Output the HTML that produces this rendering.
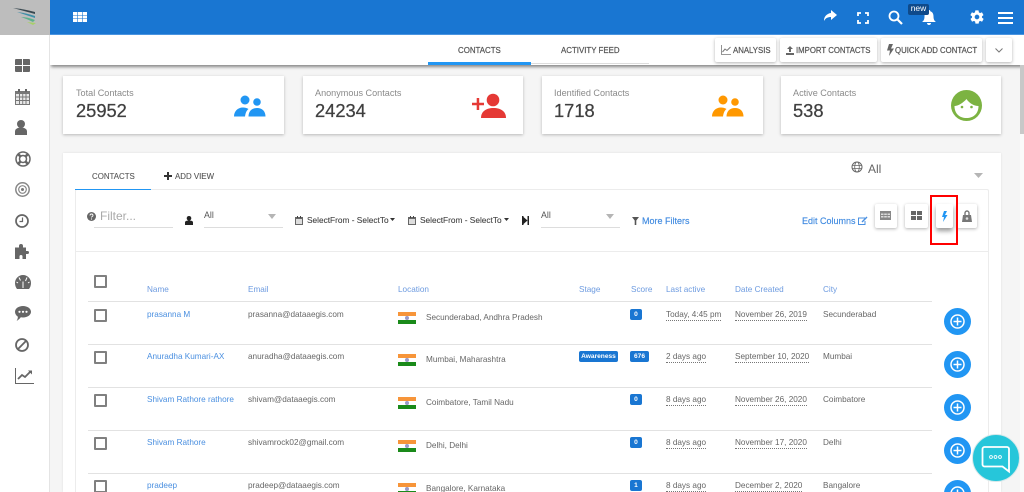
<!DOCTYPE html>
<html><head><meta charset="utf-8"><title>Contacts</title>
<style>
html,body{margin:0;padding:0;width:1024px;height:492px;overflow:hidden;background:#f5f5f5}
#w{position:relative;width:1024px;height:492px;overflow:hidden;background:#f5f5f5;font-family:"Liberation Sans",sans-serif;filter:blur(.35px)}
.a{position:absolute}
.t{position:absolute;white-space:nowrap;line-height:12px;font-size:8.2px;color:#666}
.b{color:#4a8fe0}
.h{color:#6d9be0}
.u{border-bottom:1px dotted #777;line-height:10px}
.card{position:absolute;background:#fff;top:76px;height:58px;box-shadow:0 1px 3px rgba(0,0,0,.25)}
.lab{position:absolute;left:12px;top:11px;font-size:9.1px;color:#8a8a8a;white-space:nowrap;line-height:12px}
.num{position:absolute;left:12px;top:24px;font-size:18.3px;color:#3f3f3f;line-height:22px;-webkit-text-stroke:.25px #3f3f3f}
.btn{position:absolute;top:38px;height:24px;background:#fff;border-radius:2px;box-shadow:0 1px 3px rgba(0,0,0,.3);font-size:7.8px;color:#555;line-height:25px;white-space:nowrap;-webkit-text-stroke:.2px #555}
.sb{position:absolute;top:204px;height:24px;background:#fff;border-radius:2px;box-shadow:0 1px 3px rgba(0,0,0,.3)}
.line{position:absolute;left:88px;width:844px;height:1px;background:#e2e2e2}
.cb{position:absolute;left:94px;width:9px;height:9px;border:2px solid #808080;border-radius:1px;background:#fff}
.fl{position:absolute;left:398px;width:18px;height:12px;background:linear-gradient(#f7953a 0 4px,#fff 4px 8px,#1a8a1a 8px 12px)}
.fl:after{content:"";position:absolute;left:7px;top:4px;width:4px;height:4px;border-radius:50%;background:#9a9ac8}
.bd{position:absolute;background:#1976d2;color:#fff;font-size:6.6px;font-weight:bold;text-align:center;height:11px;line-height:11px;border-radius:2px}
.plus{position:absolute;left:944px;width:27px;height:27px}
svg{position:absolute;overflow:visible}
</style></head><body><div id="w">

<!-- topbar -->
<div class="a" style="left:50px;top:0;width:974px;height:34px;background:#1976d2"></div>
<div class="a" style="left:50px;top:34px;width:974px;height:1px;background:#4a94e0"></div>
<svg style="left:73px;top:12px" width="14" height="10" viewBox="0 0 14 10"><path fill="#fff" d="M0 0h4.300v3H0zM4.900 0h4.200v3H4.900zM9.700 0H14v3H9.700zM0 3.500h4.300v3H0zM4.900 3.500h4.200v3H4.900zM9.700 3.500H14v3H9.700zM0 7h4.300v3H0zM4.900 7h4.200v3H4.900zM9.700 7H14v3H9.700z"/></svg>
<svg style="left:823px;top:10px" width="14" height="12" viewBox="0 0 14 12"><path fill="#fff" d="M8 0l6 5-6 5V7C5 7 2.500 8 1 11 .8 6.500 4 3.500 8 3z"/></svg>
<svg style="left:857px;top:12px" width="12" height="12" viewBox="0 0 12 12"><path fill="none" stroke="#fff" stroke-width="1.800" d="M1 4V1h3M8 1h3v3M11 8v3H8M4 11H1V8"/></svg>
<svg style="left:888px;top:10px" width="15" height="15" viewBox="0 0 15 15"><circle cx="6" cy="6" r="4.500" fill="none" stroke="#fff" stroke-width="1.800"/><path d="M9.500 9.500L14 14" stroke="#fff" stroke-width="2.200"/></svg>
<svg style="left:922px;top:10px" width="14" height="15" viewBox="0 0 14 15"><path fill="#fff" d="M7 0c1 0 1.300.7 1.300 1.300C10.500 2 11.500 4 11.500 6.500c0 3 1 4.500 2.500 5.500H0c1.500-1 2.500-2.500 2.500-5.500C2.500 4 3.500 2 5.700 1.300 5.700.7 6 0 7 0zM5 13h4c0 1.200-1 2-2 2s-2-.8-2-2z"/></svg>
<div class="a" style="left:908px;top:4px;width:21px;height:11px;background:#0f4a8a;border-radius:2px;color:#fff;font-size:8.5px;line-height:9px;text-align:center">new</div>
<svg style="left:969px;top:9px" width="16" height="16" viewBox="0 0 24 24"><path fill="#fff" d="M19.400 13c.1-.3.100-.7.100-1s0-.7-.1-1l2.100-1.600c.2-.2.200-.4.100-.6l-2-3.500c-.1-.2-.4-.3-.6-.2l-2.500 1c-.5-.4-1.100-.7-1.700-1l-.4-2.600c0-.3-.2-.5-.5-.5h-4c-.2 0-.5.200-.5.400l-.4 2.700c-.6.200-1.100.6-1.700 1l-2.500-1c-.2-.1-.5 0-.6.200l-2 3.500c-.1.200-.1.400.1.600L4.600 11c0 .3-.1.700-.1 1s0 .7.100 1l-2.100 1.600c-.2.200-.2.400-.1.600l2 3.500c.1.200.4.300.6.200l2.500-1c.5.400 1.100.7 1.700 1l.4 2.600c0 .3.200.5.500.5h4c.2 0 .5-.2.500-.4l.4-2.700c.6-.2 1.200-.6 1.700-1l2.500 1c.2.100.5 0 .6-.2l2-3.500c.1-.2.100-.4-.1-.6zM12 15.500a3.500 3.500 0 1 1 0-7 3.500 3.500 0 0 1 0 7z"/></svg>
<div class="a" style="left:998px;top:12px;width:15px;height:2px;background:#fff;box-shadow:0 5px 0 #fff,0 10px 0 #fff"></div>

<!-- subheader -->
<div class="a" style="left:50px;top:35px;width:974px;height:30px;background:#fff;box-shadow:0 3px 3px -1px rgba(0,0,0,.45)"></div>
<div class="t" style="left:458px;top:45px;font-size:7.9px;color:#555;-webkit-text-stroke:.2px #555">CONTACTS</div>
<div class="t" style="left:561px;top:45px;font-size:7.9px;color:#555;-webkit-text-stroke:.2px #555">ACTIVITY FEED</div>
<div class="a" style="left:531px;top:63px;width:118px;height:1px;background:#ddd"></div>
<div class="a" style="left:428px;top:62px;width:103px;height:3px;background:#2196f3"></div>

<div class="btn" style="left:715px;width:61px"><span style="position:absolute;left:18px">ANALYSIS</span></div>
<svg style="left:721px;top:45px" width="10" height="10" viewBox="0 0 10 10"><path d="M.5 0v9.500H10" fill="none" stroke="#777" stroke-width=".8"/><path d="M1.500 7L4 4l2 1.500L9.500 2" fill="none" stroke="#777" stroke-width="1"/></svg>
<div class="btn" style="left:780px;width:97px"><span style="position:absolute;left:16px">IMPORT CONTACTS</span></div>
<svg style="left:786px;top:46px" width="8" height="9" viewBox="0 0 8 9"><path d="M4 0l3 3H5v3H3V3H1zM0 7h8v2H0z" fill="#666"/></svg>
<div class="btn" style="left:881px;width:101px"><span style="position:absolute;left:14px">QUICK ADD CONTACT</span></div>
<svg style="left:887px;top:44px" width="7" height="12" viewBox="0 0 7 12"><path d="M2 0h4L4 4.500h3L2 12l1-5.500H0z" fill="#666"/></svg>
<div class="btn" style="left:986px;width:26px"></div>
<svg style="left:995px;top:48px" width="8" height="5" viewBox="0 0 8 5"><path d="M.5.500L4 4 7.500.500" fill="none" stroke="#777" stroke-width="1"/></svg>

<div class="a" style="left:1020px;top:65px;width:4px;height:69px;background:#c8c8c8"></div>
<div class="a" style="left:1020px;top:134px;width:4px;height:358px;background:#fafafa"></div>

<!-- stat cards -->
<div class="card" style="left:63px;width:221px"><div class="lab" style="left:13px">Total Contacts</div><div class="num" style="left:13px">25952</div>
<svg style="left:171px;top:19px" width="32" height="23" viewBox="0 0 32 23"><circle cx="11" cy="5" r="4.500" fill="#2196f3"/><circle cx="23" cy="7" r="3.800" fill="#2196f3"/><path d="M0 21.500c0-5 3.500-9 9-9 2 0 4 .5 5.500 1.500-2 1.500-3 4-3.500 7.500z" fill="#2196f3"/><path d="M14.500 21.500c0-5 3-8.500 8.500-8.500s8.500 3.500 8.500 8.500z" fill="#2196f3"/></svg></div>
<div class="card" style="left:303px;width:220px"><div class="lab">Anonymous Contacts</div><div class="num">24234</div>
<svg style="left:169px;top:17px" width="34" height="25" viewBox="0 0 34 25"><circle cx="21" cy="7" r="6.300" fill="#e53935"/><path d="M9 25c0-6.500 5-10 12.500-10S34 18.500 34 25z" fill="#e53935"/><path d="M0 9.800h12v2.500H0zM4.700 5h2.500v12H4.700z" fill="#e53935"/></svg></div>
<div class="card" style="left:542px;width:221px"><div class="lab">Identified Contacts</div><div class="num">1718</div>
<svg style="left:170px;top:19px" width="32" height="23" viewBox="0 0 32 23"><circle cx="11" cy="5" r="4.500" fill="#ff9800"/><circle cx="23" cy="7" r="3.800" fill="#ff9800"/><path d="M0 21.500c0-5 3.500-9 9-9 2 0 4 .5 5.500 1.500-2 1.500-3 4-3.500 7.500z" fill="#ff9800"/><path d="M14.500 21.500c0-5 3-8.500 8.500-8.500s8.500 3.500 8.500 8.500z" fill="#ff9800"/></svg></div>
<div class="card" style="left:781px;width:220px"><div class="lab">Active Contacts</div><div class="num">538</div>
<svg style="left:170px;top:14px" width="31" height="31" viewBox="0 0 31 31"><circle cx="15.500" cy="15.500" r="15.500" fill="#7cb342"/><path d="M3.500 16C7 16 12 13 15.500 9 18 13 23 16 27.500 16 27.500 24 22 28 15.500 28S3.500 24 3.500 16z" fill="#fff"/><circle cx="11" cy="17" r="1.300" fill="#7cb342"/><circle cx="20.500" cy="17" r="1.300" fill="#7cb342"/></svg></div>

<!-- main card -->
<div class="a" style="left:63px;top:153px;width:938px;height:339px;background:#fff;box-shadow:0 0 2px rgba(0,0,0,.1)"></div>
<div class="a" style="left:75px;top:189px;width:914px;height:303px;border:1px solid #ececec;border-bottom:0;box-sizing:border-box;border-radius:2px 2px 0 0"></div>
<div class="a" style="left:75px;top:189px;width:76px;height:1px;background:#2196f3"></div>
<div class="t" style="left:92px;top:171px;font-size:7.9px;color:#555;-webkit-text-stroke:.1px #555">CONTACTS</div>
<svg style="left:164px;top:172px" width="8" height="8" viewBox="0 0 8 8"><path d="M3 0h2v3h3v2H5v3H3V5H0V3h3z" fill="#333"/></svg>
<div class="t" style="left:175px;top:171px;font-size:7.9px;color:#555;-webkit-text-stroke:.1px #555">ADD VIEW</div>
<svg style="left:851px;top:161px" width="12" height="12" viewBox="0 0 12 12"><circle cx="6" cy="6" r="5" fill="none" stroke="#666" stroke-width="1"/><ellipse cx="6" cy="6" rx="2.300" ry="5" fill="none" stroke="#666" stroke-width=".8"/><path d="M1 4.500h10M1 7.500h10" stroke="#666" stroke-width=".8"/></svg>
<div class="t" style="left:868px;top:163px;font-size:12px;color:#666">All</div>
<svg style="left:974px;top:173px" width="9" height="5" viewBox="0 0 9 5"><path d="M0 0h9L4.500 5z" fill="#b5b5b5"/></svg>

<!-- filters -->
<svg style="left:87px;top:212px" width="9" height="9" viewBox="0 0 9 9"><circle cx="4.500" cy="4.500" r="4.500" fill="#666"/><path d="M3 3.500c0-2 3-2 3 0 0 1-1.500 1-1.500 2" fill="none" stroke="#fff" stroke-width=".9"/><circle cx="4.500" cy="7" r=".6" fill="#fff"/></svg>
<div class="t" style="left:100px;top:210px;font-size:12px;color:#a9a9a9">Filter...</div>
<div class="a" style="left:94px;top:227px;width:79px;height:1px;background:#ddd"></div>
<svg style="left:185px;top:216px" width="8" height="9" viewBox="0 0 8 9"><circle cx="4" cy="2.300" r="2.300" fill="#222"/><path d="M0 9V6.500C0 5 1.500 4.500 4 4.500s4 .5 4 2V9z" fill="#222"/></svg>
<div class="t" style="left:204px;top:209px;font-size:8.8px;color:#555">All</div>
<svg style="left:268px;top:214px" width="8" height="5" viewBox="0 0 8 5"><path d="M0 0h8L4 5z" fill="#b5b5b5"/></svg>
<div class="a" style="left:204px;top:227px;width:79px;height:1px;background:#ddd"></div>
<svg style="left:295px;top:216px" width="8" height="9" viewBox="0 0 8 9"><path d="M0 1h8v8H0z" fill="#666"/><path d="M1 3h6v5H1z" fill="#ddd"/><path d="M2 0h1v2H2zM5 0h1v2H5z" fill="#444"/></svg>
<div class="t" style="left:307px;top:214px;font-size:8.3px;color:#444;-webkit-text-stroke:.1px #444">SelectFrom - SelectTo</div>
<svg style="left:390px;top:218px" width="5" height="3" viewBox="0 0 5 3"><path d="M0 0h5L2.500 3z" fill="#333"/></svg>
<svg style="left:408px;top:216px" width="8" height="9" viewBox="0 0 8 9"><path d="M0 1h8v8H0z" fill="#666"/><path d="M1 3h6v5H1z" fill="#ddd"/><path d="M2 0h1v2H2zM5 0h1v2H5z" fill="#444"/></svg>
<div class="t" style="left:420px;top:214px;font-size:8.3px;color:#444;-webkit-text-stroke:.1px #444">SelectFrom - SelectTo</div>
<svg style="left:504px;top:218px" width="5" height="3" viewBox="0 0 5 3"><path d="M0 0h5L2.500 3z" fill="#333"/></svg>
<svg style="left:522px;top:216px" width="7" height="9" viewBox="0 0 7 9"><path d="M0 0h1.500v9H0zM5.500 0H7v9H5.500zM1.500 1l4 3.500-4 3.500z" fill="#222"/></svg>
<div class="t" style="left:541px;top:209px;font-size:8.8px;color:#555">All</div>
<svg style="left:606px;top:214px" width="8" height="5" viewBox="0 0 8 5"><path d="M0 0h8L4 5z" fill="#b5b5b5"/></svg>
<div class="a" style="left:541px;top:227px;width:79px;height:1px;background:#ddd"></div>
<svg style="left:632px;top:217px" width="7" height="8" viewBox="0 0 7 8"><path d="M0 0h7L4.300 3.500V8H2.700V3.500z" fill="#555"/></svg>
<div class="t" style="left:642px;top:215px;font-size:9px;color:#3f8ae0;-webkit-text-stroke:.15px #3f8ae0">More Filters</div>
<div class="t" style="left:802px;top:215px;font-size:9px;color:#3f8ae0;-webkit-text-stroke:.15px #3f8ae0">Edit Columns</div>
<svg style="left:858px;top:216px" width="10" height="9" viewBox="0 0 10 9"><path d="M7 2H.5v6.500H7V5" fill="none" stroke="#4a90e2" stroke-width="1"/><path d="M3.500 5.500L8.500 .5l1 1-5 5z" fill="#4a90e2"/></svg>

<div class="sb" style="left:875px;width:22px"></div>
<svg style="left:880px;top:211px" width="11" height="9" viewBox="0 0 11 9"><path d="M0 0h11v9H0z" fill="#888"/><path d="M1 2.500h2.500V4H1zM4.200 2.500h2.600V4H4.200zM7.500 2.500H10V4H7.500zM1 5h2.500v1.500H1zM4.200 5h2.600v1.500H4.200zM7.500 5H10v1.500H7.500z" fill="#ddd"/></svg>
<div class="sb" style="left:905px;width:23px"></div>
<svg style="left:911px;top:211px" width="11" height="9" viewBox="0 0 11 9"><path d="M0 0h5v4H0zM6 0h5v4H6zM0 5h5v4H0zM6 5h5v4H6z" fill="#666"/></svg>
<div class="sb" style="left:936px;width:17px;box-shadow:0 3px 5px rgba(0,0,0,.4)"></div>
<svg style="left:941px;top:211px" width="7" height="11" viewBox="0 0 7 11"><path d="M3 0h3L4 4h2.500L2 11l1-5H1z" fill="#2196f3"/></svg>
<div class="sb" style="left:957px;width:20px"></div>
<svg style="left:962px;top:210px" width="10" height="12" viewBox="0 0 10 12"><path d="M3 5V3a2 2 0 0 1 4 0v2" fill="none" stroke="#777" stroke-width="1.400"/><path d="M1 5h8l1 7H0z" fill="#777"/><circle cx="5" cy="8.500" r="1.300" fill="#ddd"/></svg>
<div class="a" style="left:930px;top:195px;width:24px;height:46px;border:2px solid #f00"></div>
<div class="a" style="left:75px;top:251px;width:914px;height:1px;background:#ececec"></div>

<!-- table -->
<div class="cb" style="top:275px"></div>
<div class="t h" style="left:147px;top:284px">Name</div>
<div class="t h" style="left:248px;top:284px">Email</div>
<div class="t h" style="left:398px;top:284px">Location</div>
<div class="t h" style="left:579px;top:284px">Stage</div>
<div class="t h" style="left:631px;top:284px">Score</div>
<div class="t h" style="left:666px;top:284px">Last active</div>
<div class="t h" style="left:735px;top:284px">Date Created</div>
<div class="t h" style="left:823px;top:284px">City</div>
<div class="line" style="top:301px"></div>

<div class="cb" style="top:309px"></div>
<div class="t b" style="left:147px;top:309px">prasanna M</div>
<div class="t" style="left:248px;top:309px">prasanna@dataaegis.com</div>
<div class="fl" style="top:312px"></div>
<div class="t" style="left:426px;top:312px">Secunderabad, Andhra Pradesh</div>
<div class="bd" style="left:630px;top:309px;width:12px">0</div>
<div class="t u" style="left:666px;top:310px">Today, 4:45 pm</div>
<div class="t u" style="left:735px;top:310px">November 26, 2019</div>
<div class="t" style="left:823px;top:309px">Secunderabad</div>
<svg class="plus" style="top:308px" viewBox="0 0 27 27"><circle cx="13.500" cy="13.500" r="13.500" fill="#2196f3"/><circle cx="13.500" cy="13.500" r="6.500" fill="none" stroke="#fff" stroke-width="1.500"/><path d="M13.500 9.500v8M9.500 13.500h8" stroke="#fff" stroke-width="1.500"/></svg>
<div class="line" style="top:344px"></div>

<div class="cb" style="top:351px"></div>
<div class="t b" style="left:147px;top:351px">Anuradha Kumari-AX</div>
<div class="t" style="left:248px;top:351px">anuradha@dataaegis.com</div>
<div class="fl" style="top:354px"></div>
<div class="t" style="left:426px;top:354px">Mumbai, Maharashtra</div>
<div class="bd" style="left:579px;top:351px;width:39px">Awareness</div>
<div class="bd" style="left:630px;top:351px;width:19px">676</div>
<div class="t u" style="left:666px;top:352px">2 days ago</div>
<div class="t u" style="left:735px;top:352px">September 10, 2020</div>
<div class="t" style="left:823px;top:351px">Mumbai</div>
<svg class="plus" style="top:351px" viewBox="0 0 27 27"><circle cx="13.500" cy="13.500" r="13.500" fill="#2196f3"/><circle cx="13.500" cy="13.500" r="6.500" fill="none" stroke="#fff" stroke-width="1.500"/><path d="M13.500 9.500v8M9.500 13.500h8" stroke="#fff" stroke-width="1.500"/></svg>
<div class="line" style="top:387px"></div>

<div class="cb" style="top:394px"></div>
<div class="t b" style="left:147px;top:394px">Shivam Rathore rathore</div>
<div class="t" style="left:248px;top:394px">shivam@dataaegis.com</div>
<div class="fl" style="top:397px"></div>
<div class="t" style="left:426px;top:397px">Coimbatore, Tamil Nadu</div>
<div class="bd" style="left:630px;top:394px;width:12px">0</div>
<div class="t u" style="left:666px;top:395px">8 days ago</div>
<div class="t u" style="left:735px;top:395px">November 26, 2020</div>
<div class="t" style="left:823px;top:394px">Coimbatore</div>
<svg class="plus" style="top:394px" viewBox="0 0 27 27"><circle cx="13.500" cy="13.500" r="13.500" fill="#2196f3"/><circle cx="13.500" cy="13.500" r="6.500" fill="none" stroke="#fff" stroke-width="1.500"/><path d="M13.500 9.500v8M9.500 13.500h8" stroke="#fff" stroke-width="1.500"/></svg>
<div class="line" style="top:430px"></div>

<div class="cb" style="top:437px"></div>
<div class="t b" style="left:147px;top:437px">Shivam Rathore</div>
<div class="t" style="left:248px;top:437px">shivamrock02@gmail.com</div>
<div class="fl" style="top:440px"></div>
<div class="t" style="left:426px;top:440px">Delhi, Delhi</div>
<div class="bd" style="left:630px;top:437px;width:12px">0</div>
<div class="t u" style="left:666px;top:438px">8 days ago</div>
<div class="t u" style="left:735px;top:438px">November 17, 2020</div>
<div class="t" style="left:823px;top:437px">Delhi</div>
<svg class="plus" style="top:437px" viewBox="0 0 27 27"><circle cx="13.500" cy="13.500" r="13.500" fill="#2196f3"/><circle cx="13.500" cy="13.500" r="6.500" fill="none" stroke="#fff" stroke-width="1.500"/><path d="M13.500 9.500v8M9.500 13.500h8" stroke="#fff" stroke-width="1.500"/></svg>
<div class="line" style="top:473px"></div>

<div class="cb" style="top:480px"></div>
<div class="t b" style="left:147px;top:480px">pradeep</div>
<div class="t" style="left:248px;top:480px">pradeep@dataaegis.com</div>
<div class="fl" style="top:483px"></div>
<div class="t" style="left:426px;top:483px">Bangalore, Karnataka</div>
<div class="bd" style="left:630px;top:480px;width:12px">1</div>
<div class="t u" style="left:666px;top:481px">8 days ago</div>
<div class="t u" style="left:735px;top:481px">December 2, 2020</div>
<div class="t" style="left:823px;top:480px">Bangalore</div>
<svg class="plus" style="top:480px" viewBox="0 0 27 27"><circle cx="13.500" cy="13.500" r="13.500" fill="#2196f3"/><circle cx="13.500" cy="13.500" r="6.500" fill="none" stroke="#fff" stroke-width="1.500"/><path d="M13.500 9.500v8M9.500 13.500h8" stroke="#fff" stroke-width="1.500"/></svg>

<!-- chat bubble -->
<svg style="left:972px;top:434px" width="48" height="48" viewBox="0 0 48 48"><circle cx="24" cy="24" r="23.500" fill="#26c6da" stroke="#d5e8ea" stroke-width="1"/><path d="M12.500 13H35a2 2 0 0 1 2 2v22.500l-6.500-5h-18a2 2 0 0 1-2-2V15a2 2 0 0 1 2-2z" fill="none" stroke="#fff" stroke-width="1.800"/><circle cx="19" cy="23" r="1.400" fill="none" stroke="#fff" stroke-width=".9"/><circle cx="23.500" cy="23" r="1.400" fill="none" stroke="#fff" stroke-width=".9"/><circle cx="28" cy="23" r="1.400" fill="none" stroke="#fff" stroke-width=".9"/></svg>

<!-- sidebar -->
<div class="a" style="left:0;top:35px;width:49px;height:457px;background:#fff;border-right:1px solid #e4e4e4"></div>
<div class="a" style="left:0;top:0;width:50px;height:35px;background:#bdbdbd"></div>
<svg style="left:12px;top:7px" width="26" height="20" viewBox="0 0 26 20"><path d="M1 1Q12 2 23 5V7Q12 4 1 1z" fill="#37474f"/><path d="M5 5Q14 6 23 9v2Q14 8 5 5z" fill="#3d8fa8"/><path d="M9 10q7 0 14 3l-2 2Q15 12 9 10z" fill="#5cb08c"/><path d="M15 15l9 1-3 2z" fill="#a8cf6a"/></svg>
<svg style="left:15px;top:59px" width="15" height="13" viewBox="0 0 15 13"><path fill="#666" d="M1 0h6v6H0V1a1 1 0 0 1 1-1zM8 0h6a1 1 0 0 1 1 1v5H8zM0 7h7v6H1a1 1 0 0 1-1-1zM8 7h7v5a1 1 0 0 1-1 1H8z"/></svg>
<svg style="left:15px;top:89px" width="15" height="16" viewBox="0 0 15 16"><path fill="#777" d="M0 2h15v14H0z"/><path fill="#e8e8e8" d="M1 5h3v2.500H1zM5 5h2.300v2.500H5zM8.200 5h2.300v2.500H8.200zM11.500 5H14v2.500h-2.500zM1 8.500h3V11H1zM5 8.500h2.300V11H5zM8.200 8.500h2.300V11H8.200zM11.500 8.500H14V11h-2.500zM1 12h3v3H1zM5 12h2.300v3H5zM8.200 12h2.300v3H8.200zM11.500 12H14v3h-2.500z"/><path fill="#666" d="M3 0h2v3H3zM10 0h2v3h-2z"/></svg>
<svg style="left:15px;top:120px" width="12" height="15" viewBox="0 0 12 15"><circle cx="6" cy="4" r="4" fill="#666"/><path d="M0 15v-3.500C0 9 2.500 7.500 6 7.500s6 1.500 6 4V15z" fill="#666"/></svg>
<svg style="left:15px;top:151px" width="16" height="16" viewBox="0 0 16 16"><circle cx="8" cy="8" r="7" fill="none" stroke="#666" stroke-width="1.500"/><circle cx="8" cy="8" r="3.500" fill="none" stroke="#666" stroke-width="1.500"/><path d="M3 3l2.500 2.500M13 3l-2.500 2.500M3 13l2.500-2.500M13 13l-2.500-2.500" stroke="#666" stroke-width="2.600"/></svg>
<svg style="left:15px;top:182px" width="15" height="15" viewBox="0 0 15 15"><circle cx="7.500" cy="7.500" r="6.700" fill="none" stroke="#888" stroke-width="1.500"/><circle cx="7.500" cy="7.500" r="3.800" fill="none" stroke="#888" stroke-width="1.200"/><circle cx="7.500" cy="7.500" r="1.500" fill="#777"/></svg>
<svg style="left:15px;top:214px" width="14" height="14" viewBox="0 0 14 14"><circle cx="7" cy="7" r="6" fill="none" stroke="#666" stroke-width="1.700"/><path d="M7.500 3.500v4h-3" fill="none" stroke="#666" stroke-width="1.200"/></svg>
<svg style="left:15px;top:244px" width="15" height="15" viewBox="0 0 15 15"><path fill="#666" d="M0 3.500h4V2a2 2 0 0 1 4 0v1.500h3V7h1.500a1.500 1.500 0 0 1 0 3H11v5H7.500v-2.500a1.500 1.500 0 0 0-3 0V15H0z"/></svg>
<svg style="left:15px;top:275px" width="16" height="14" viewBox="0 0 16 14"><path fill="#666" d="M8 0a8 8 0 0 1 8 8c0 2.500-.8 4.500-2 6H2C.8 12.500 0 10.500 0 8a8 8 0 0 1 8-8z"/><path stroke="#fff" stroke-width="1" d="M8 6.500V13M4 2.500l1.500 3M12 2.500L10.500 6M1.500 7L3 8M14.500 7L13 8"/></svg>
<svg style="left:15px;top:306px" width="16" height="15" viewBox="0 0 16 15"><path fill="#666" d="M8 0c4.400 0 8 2.500 8 5.800s-3.600 5.700-8 5.700c-.8 0-1.500-.1-2.200-.2C4.500 13 2.800 14.300 1.500 15c.8-1 1.300-2.600 1.400-4.300C1.100 9.600 0 7.800 0 5.800 0 2.500 3.600 0 8 0z"/><circle cx="4.500" cy="5.800" r="1.100" fill="#fff"/><circle cx="8" cy="5.800" r="1.100" fill="#fff"/><circle cx="11.500" cy="5.800" r="1.100" fill="#fff"/></svg>
<svg style="left:15px;top:338px" width="14" height="14" viewBox="0 0 14 14"><circle cx="7" cy="7" r="6" fill="none" stroke="#666" stroke-width="1.800"/><path d="M2.800 11.200l8.400-8.400" stroke="#666" stroke-width="1.800"/></svg>
<svg style="left:15px;top:368px" width="19" height="16" viewBox="0 0 19 16"><path d="M.5 0v15.500H19" fill="none" stroke="#666" stroke-width="1"/><path d="M3 11l4-4 3 2 5-5" fill="none" stroke="#666" stroke-width="1.800"/><path d="M13 2.500h4v4z" fill="#666"/></svg>
</div></body></html>
